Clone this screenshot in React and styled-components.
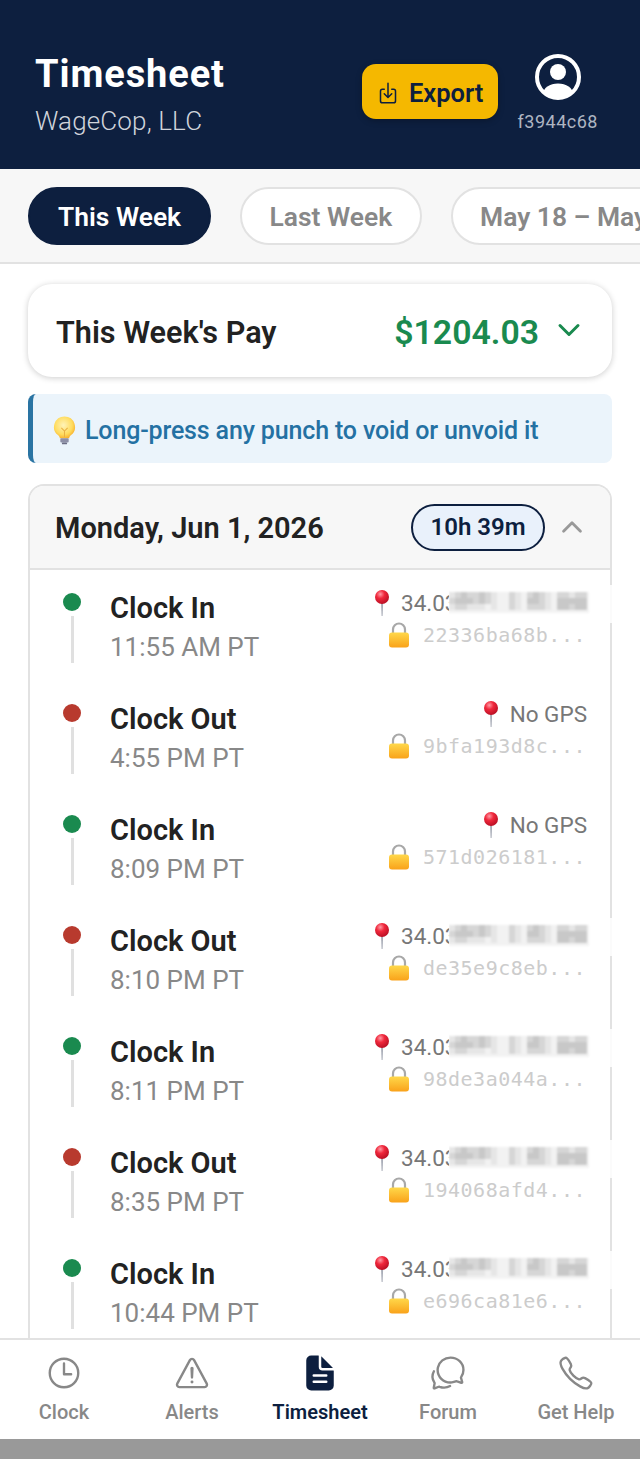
import React from 'react';
import styled, { createGlobalStyle } from 'styled-components';
import {
  IoCallOutline,
  IoChatbubblesOutline,
  IoChevronDown,
  IoChevronUp,
  IoDocumentText,
  IoDownloadOutline,
  IoTimeOutline,
  IoWarningOutline,
} from 'react-icons/io5';

const navy = '#0d1f3f';

const GlobalStyle = createGlobalStyle`
  html, body {
    margin: 0;
    padding: 0;
    background: #fff;
    font-family: Roboto, "Liberation Sans", sans-serif;
  }
  * { box-sizing: border-box; }
`;

const Screen = styled.div`
  width: 640px;
  height: 1459px;
  display: flex;
  flex-direction: column;
  overflow: hidden;
  background: #fff;
`;

const Header = styled.header`
  height: 169px;
  flex: none;
  background: ${navy};
  display: flex;
  align-items: flex-start;
  justify-content: space-between;
  padding: 53px 42px 0 35px;
`;

const TitleBlock = styled.div`
  display: flex;
  flex-direction: column;
`;

const Title = styled.h1`
  margin: 0;
  color: #fff;
  font-size: 38px;
  line-height: 42px;
  font-weight: 700;
  letter-spacing: 0.9px;
`;

const Company = styled.div`
  margin-top: 9px;
  color: #d0d4db;
  font-size: 26px;
  line-height: 34px;
  letter-spacing: 0.15px;
  font-weight: 300;
`;

const HeaderActions = styled.div`
  display: flex;
  align-items: flex-start;
  gap: 20px;
`;

const ExportButton = styled.button`
  width: 136px;
  height: 55px;
  margin-top: 11px;
  border: none;
  border-radius: 14px;
  background: #f5b800;
  color: ${navy};
  font-family: inherit;
  font-size: 25.5px;
  font-weight: 600;
  display: flex;
  align-items: center;
  justify-content: center;
  gap: 9px;
  padding: 2px 0 0;
  box-shadow: 0 2px 6px rgba(0, 0, 0, 0.25);
`;

const Account = styled.div`
  display: flex;
  flex-direction: column;
  align-items: center;
  color: #fff;
`;

const AccountId = styled.div`
  margin-top: 10px;
  color: #aeb5c2;
  font-size: 18px;
  line-height: 24px;
  letter-spacing: 0.5px;
`;

const AccountIcon = styled.svg`
  margin-top: 1px;
  display: block;
`;

const TabBar = styled.nav`
  height: 95px;
  flex: none;
  background: #f7f7f7;
  border-bottom: 2px solid #e2e2e2;
  display: flex;
  gap: 29px;
  padding: 18px 0 0 28px;
  overflow: hidden;
`;

const Tab = styled.div`
  height: 58px;
  flex: none;
  padding: 1px ${(p) => (p.$active ? 28 : 27.5)}px 0;
  border-radius: 29px;
  border: 2px solid ${(p) => (p.$active ? navy : '#e2e2e2')};
  background: ${(p) => (p.$active ? navy : '#fff')};
  color: ${(p) => (p.$active ? '#fff' : '#888')};
  font-size: 26.4px;
  font-weight: 600;
  display: flex;
  align-items: center;
  white-space: nowrap;
`;

const Content = styled.main`
  flex: 1;
  min-height: 0;
  overflow: hidden;
  padding: 20px 28px 0;
  display: flex;
  flex-direction: column;
`;

const PayCard = styled.section`
  height: 93px;
  flex: none;
  border-radius: 24px;
  background: #fff;
  box-shadow: 0 1px 6px rgba(0, 0, 0, 0.2);
  display: flex;
  align-items: center;
  padding: 3px 27px 0 28px;
`;

const PayLabel = styled.div`
  flex: 1;
  color: #222;
  font-size: 30.6px;
  font-weight: 600;
`;

const PayAmount = styled.div`
  color: #1a8a4f;
  font-size: 33.8px;
  font-weight: 600;
`;

const PayChevron = styled(IoChevronDown)`
  margin-left: 14px;
  color: #1a8a4f;
  margin-top: -4px;
`;

const Hint = styled.div`
  height: 69px;
  flex: none;
  margin-top: 17px;
  border-left: 5px solid #2a74a3;
  border-radius: 8px;
  background: #ebf4fb;
  display: flex;
  align-items: center;
  gap: 9px;
  padding: 3px 0 0 20px;
  color: #2471a3;
  font-size: 25px;
  font-weight: 500;
  letter-spacing: -0.15px;
`;

const DayCard = styled.section`
  margin-top: 21px;
  flex: 1;
  min-height: 0;
  border: 2px solid #e2e2e2;
  border-bottom: none;
  border-radius: 16px 16px 0 0;
  background: #fff;
`;

const DayHeader = styled.div`
  height: 84px;
  background: #f7f7f7;
  border-bottom: 2px solid #e2e2e2;
  border-radius: 14px 14px 0 0;
  display: flex;
  align-items: center;
  padding: 0 23px 0 25px;
`;

const DayTitle = styled.h2`
  flex: 1;
  margin: 0;
  padding-top: 2px;
  color: #222;
  font-size: 29px;
  font-weight: 600;
`;

const HoursBadge = styled.div`
  width: 134px;
  height: 47px;
  border: 2px solid ${navy};
  border-radius: 24px;
  background: #e9f1fb;
  color: ${navy};
  font-size: 24px;
  font-weight: 600;
  display: flex;
  align-items: center;
  justify-content: center;
`;

const DayChevron = styled(IoChevronUp)`
  margin-left: 12px;
  color: #999;
`;

const PunchRow = styled.div`
  height: 111px;
  display: flex;
  padding: 20px 23px 0 32px;
`;

const Track = styled.div`
  width: 20px;
  flex: none;
  display: flex;
  flex-direction: column;
  align-items: center;
  padding-top: 3px;
`;

const Dot = styled.div`
  width: 18px;
  height: 18px;
  border-radius: 50%;
  background: ${(p) => (p.$out ? '#b83a2e' : '#1a8a4f')};
`;

const TrackLine = styled.div`
  width: 3px;
  height: 47px;
  margin-top: 5px;
  background: #e0e0e0;
`;

const PunchInfo = styled.div`
  margin-left: 28px;
  flex: 1;
`;

const PunchType = styled.div`
  color: #222;
  font-size: 29px;
  line-height: 36px;
  font-weight: 600;
`;

const PunchTime = styled.div`
  margin-top: 3px;
  color: #888;
  font-size: 26px;
  line-height: 36px;
`;

const PunchMeta = styled.div`
  display: flex;
  flex-direction: column;
  align-items: flex-end;
  margin-top: -1px;
`;

const MetaLine = styled.div`
  height: 30px;
  padding-bottom: 2px;
  display: flex;
  align-items: center;
  gap: 9px;
  color: #777;
  font-size: 22.5px;
`;

const HashLine = styled.div`
  height: 26px;
  margin-top: 3px;
  margin-right: 1px;
  display: flex;
  align-items: center;
  gap: 13px;
  color: #ccc;
  font-family: "DejaVu Sans Mono", "Liberation Mono", monospace;
  font-size: 20px;
  letter-spacing: 0.5px;
`;

const Coords = styled.span`
  position: relative;
  display: block;
  width: 186px;
  line-height: 30px;
`;

const Redaction = styled.svg`
  position: absolute;
  left: 48px;
  top: -3px;
  display: block;
`;

const BottomNav = styled.nav`
  height: 101px;
  flex: none;
  position: relative;
  background: #fff;
  border-top: 2px solid #e2e2e2;
  display: grid;
  grid-template-columns: repeat(5, 128px);
`;

const NavItem = styled.div`
  display: flex;
  flex-direction: column;
  align-items: center;
  padding-top: 11px;
  color: ${(p) => (p.$active ? navy : '#888')};
  font-size: 20px;
  font-weight: ${(p) => (p.$active ? 600 : 500)};
`;

const NavIcon = styled.div`
  height: 44px;
  display: flex;
  align-items: center;
  justify-content: center;
`;

const NavLabel = styled.div`
  margin-top: 4px;
  line-height: 26px;
  white-space: nowrap;
`;

const SystemBar = styled.div`
  height: 20px;
  flex: none;
  background: #999;
`;

const Avatar = () => (
  <AccountIcon width="46" height="46" viewBox="0 0 46 46">
    <defs>
      <clipPath id="avatarClip">
        <circle cx="23" cy="23" r="21" />
      </clipPath>
    </defs>
    <circle cx="23" cy="23" r="21" fill="none" stroke="#fff" strokeWidth="4" />
    <circle cx="23" cy="18" r="8" fill="#fff" />
    <ellipse cx="23" cy="40" rx="15" ry="10.5" fill="#fff" clipPath="url(#avatarClip)" />
  </AccountIcon>
);

const PinEmoji = () => (
  <svg width="20" height="28" viewBox="0 0 20 28" style={{ display: 'block', flex: 'none' }}>
    <defs>
      <radialGradient id="pinBall" cx="0.38" cy="0.3" r="0.75">
        <stop offset="0" stopColor="#ff9aa5" />
        <stop offset="0.4" stopColor="#f0283c" />
        <stop offset="1" stopColor="#b50d22" />
      </radialGradient>
    </defs>
    <path d="M9 13h2.2l-.6 14h-1z" fill="#a9adb8" />
    <circle cx="10" cy="8" r="7" fill="url(#pinBall)" />
  </svg>
);

const LockEmoji = () => (
  <svg width="22" height="26" viewBox="0 0 22 26" style={{ display: 'block', flex: 'none' }}>
    <defs>
      <linearGradient id="lockBody" x1="0" y1="0" x2="0" y2="1">
        <stop offset="0" stopColor="#ffd84a" />
        <stop offset="1" stopColor="#f9a21a" />
      </linearGradient>
    </defs>
    <path d="M5 12V7.5a6 6 0 0 1 12 0V12" fill="none" stroke="#a8a8a8" strokeWidth="2.2" />
    <rect x="1" y="10.5" width="20" height="15" rx="3" fill="url(#lockBody)" />
  </svg>
);

const BulbEmoji = () => (
  <svg width="23" height="30" viewBox="0 0 22 28" style={{ display: 'block', flex: 'none' }}>
    <defs>
      <radialGradient id="bulbGlass" cx="0.45" cy="0.4" r="0.65">
        <stop offset="0" stopColor="#fff3b8" />
        <stop offset="0.65" stopColor="#ffdc5e" />
        <stop offset="1" stopColor="#f7a823" />
      </radialGradient>
    </defs>
    <path d="M11 1a10 10 0 0 0-6 18c1 .9 1.4 1.8 1.6 3h8.8c.2-1.2.6-2.1 1.6-3A10 10 0 0 0 11 1z" fill="url(#bulbGlass)" />
    <path d="M8 12l3 3 3-3M11 15v6" fill="none" stroke="#e9b143" strokeWidth="1" />
    <rect x="7" y="22" width="8" height="4" rx="1" fill="#8d8fa6" />
    <rect x="8.5" y="26" width="5" height="1.6" rx="0.8" fill="#6c6e86" />
  </svg>
);

// the coordinates are pixelated out in the source, so this is a strip of grey tiles
const tiles = [
  [1, 2, 3, 2, 2, 3, 2, 1, 0, 0, 2, 1, 0, 2, 3, 2, 1, 0, 2, 2, 1, 2, 2],
  [2, 3, 3, 3, 2, 3, 2, 1, 0, 0, 2, 1, 0, 3, 3, 2, 1, 0, 3, 3, 3, 3, 3],
  [1, 2, 2, 1, 1, 1, 0, 1, 0, 0, 2, 1, 0, 2, 2, 2, 1, 0, 3, 3, 2, 3, 3],
];
const shades = ['#f2f2f2', '#e6e6e6', '#d6d6d6', '#c8c8c8'];

const RedactedCoords = ({ id }) => (
  <Coords>
    34.03
    <Redaction width="171" height="38" viewBox="0 0 171 38">
      <defs>
        <filter id={id}>
          <feGaussianBlur stdDeviation="1" />
        </filter>
      </defs>
      <rect x="0" y="0" width="171" height="38" fill="#fff" fillOpacity="0.85" />
      <g filter={`url(#${id})`}>
        <rect x="0" y="7" width="140" height="21" fill="#f3f3f3" />
        {tiles.map((row, r) =>
          row.map((v, c) => (
            <rect key={`${r}-${c}`} x={c * 6} y={7 + r * 6} width="6" height="6" fill={shades[v]} />
          )),
        )}
      </g>
    </Redaction>
  </Coords>
);

const punches = [
  { type: 'Clock In', time: '11:55 AM PT', hash: '22336ba68b...', gps: true },
  { type: 'Clock Out', time: '4:55 PM PT', hash: '9bfa193d8c...', gps: false },
  { type: 'Clock In', time: '8:09 PM PT', hash: '571d026181...', gps: false },
  { type: 'Clock Out', time: '8:10 PM PT', hash: 'de35e9c8eb...', gps: true },
  { type: 'Clock In', time: '8:11 PM PT', hash: '98de3a044a...', gps: true },
  { type: 'Clock Out', time: '8:35 PM PT', hash: '194068afd4...', gps: true },
  { type: 'Clock In', time: '10:44 PM PT', hash: 'e696ca81e6...', gps: true },
];

const navItems = [
  { label: 'Clock', Icon: IoTimeOutline },
  { label: 'Alerts', Icon: IoWarningOutline },
  { label: 'Timesheet', Icon: IoDocumentText, active: true },
  { label: 'Forum', Icon: IoChatbubblesOutline },
  { label: 'Get Help', Icon: IoCallOutline },
];

const App = () => (
  <Screen>
    <GlobalStyle />
    <Header>
      <TitleBlock>
        <Title>Timesheet</Title>
        <Company>WageCop, LLC</Company>
      </TitleBlock>
      <HeaderActions>
        <ExportButton>
          <IoDownloadOutline size={24} />
          Export
        </ExportButton>
        <Account>
          <Avatar />
          <AccountId>f3944c68</AccountId>
        </Account>
      </HeaderActions>
    </Header>
    <TabBar>
      <Tab $active>This Week</Tab>
      <Tab>Last Week</Tab>
      <Tab>May 18 – May 24</Tab>
    </TabBar>
    <Content>
      <PayCard>
        <PayLabel>This Week's Pay</PayLabel>
        <PayAmount>$1204.03</PayAmount>
        <PayChevron size={32} />
      </PayCard>
      <Hint>
        <BulbEmoji />
        Long-press any punch to void or unvoid it
      </Hint>
      <DayCard>
        <DayHeader>
          <DayTitle>Monday, Jun 1, 2026</DayTitle>
          <HoursBadge>10h 39m</HoursBadge>
          <DayChevron size={30} />
        </DayHeader>
        {punches.map((p, i) => (
          <PunchRow key={p.hash}>
            <Track>
              <Dot $out={p.type === 'Clock Out'} />
              <TrackLine />
            </Track>
            <PunchInfo>
              <PunchType>{p.type}</PunchType>
              <PunchTime>{p.time}</PunchTime>
            </PunchInfo>
            <PunchMeta>
              <MetaLine>
                <PinEmoji />
                {p.gps ? <RedactedCoords id={`mosaic${i}`} /> : 'No GPS'}
              </MetaLine>
              <HashLine>
                <LockEmoji />
                {p.hash}
              </HashLine>
            </PunchMeta>
          </PunchRow>
        ))}
      </DayCard>
    </Content>
    <BottomNav>
      {navItems.map(({ label, Icon, active }) => (
        <NavItem key={label} $active={active}>
          <NavIcon>
            <Icon size={active ? 40 : 38} />
          </NavIcon>
          <NavLabel>{label}</NavLabel>
        </NavItem>
      ))}
    </BottomNav>
    <SystemBar />
  </Screen>
);

export default App;
